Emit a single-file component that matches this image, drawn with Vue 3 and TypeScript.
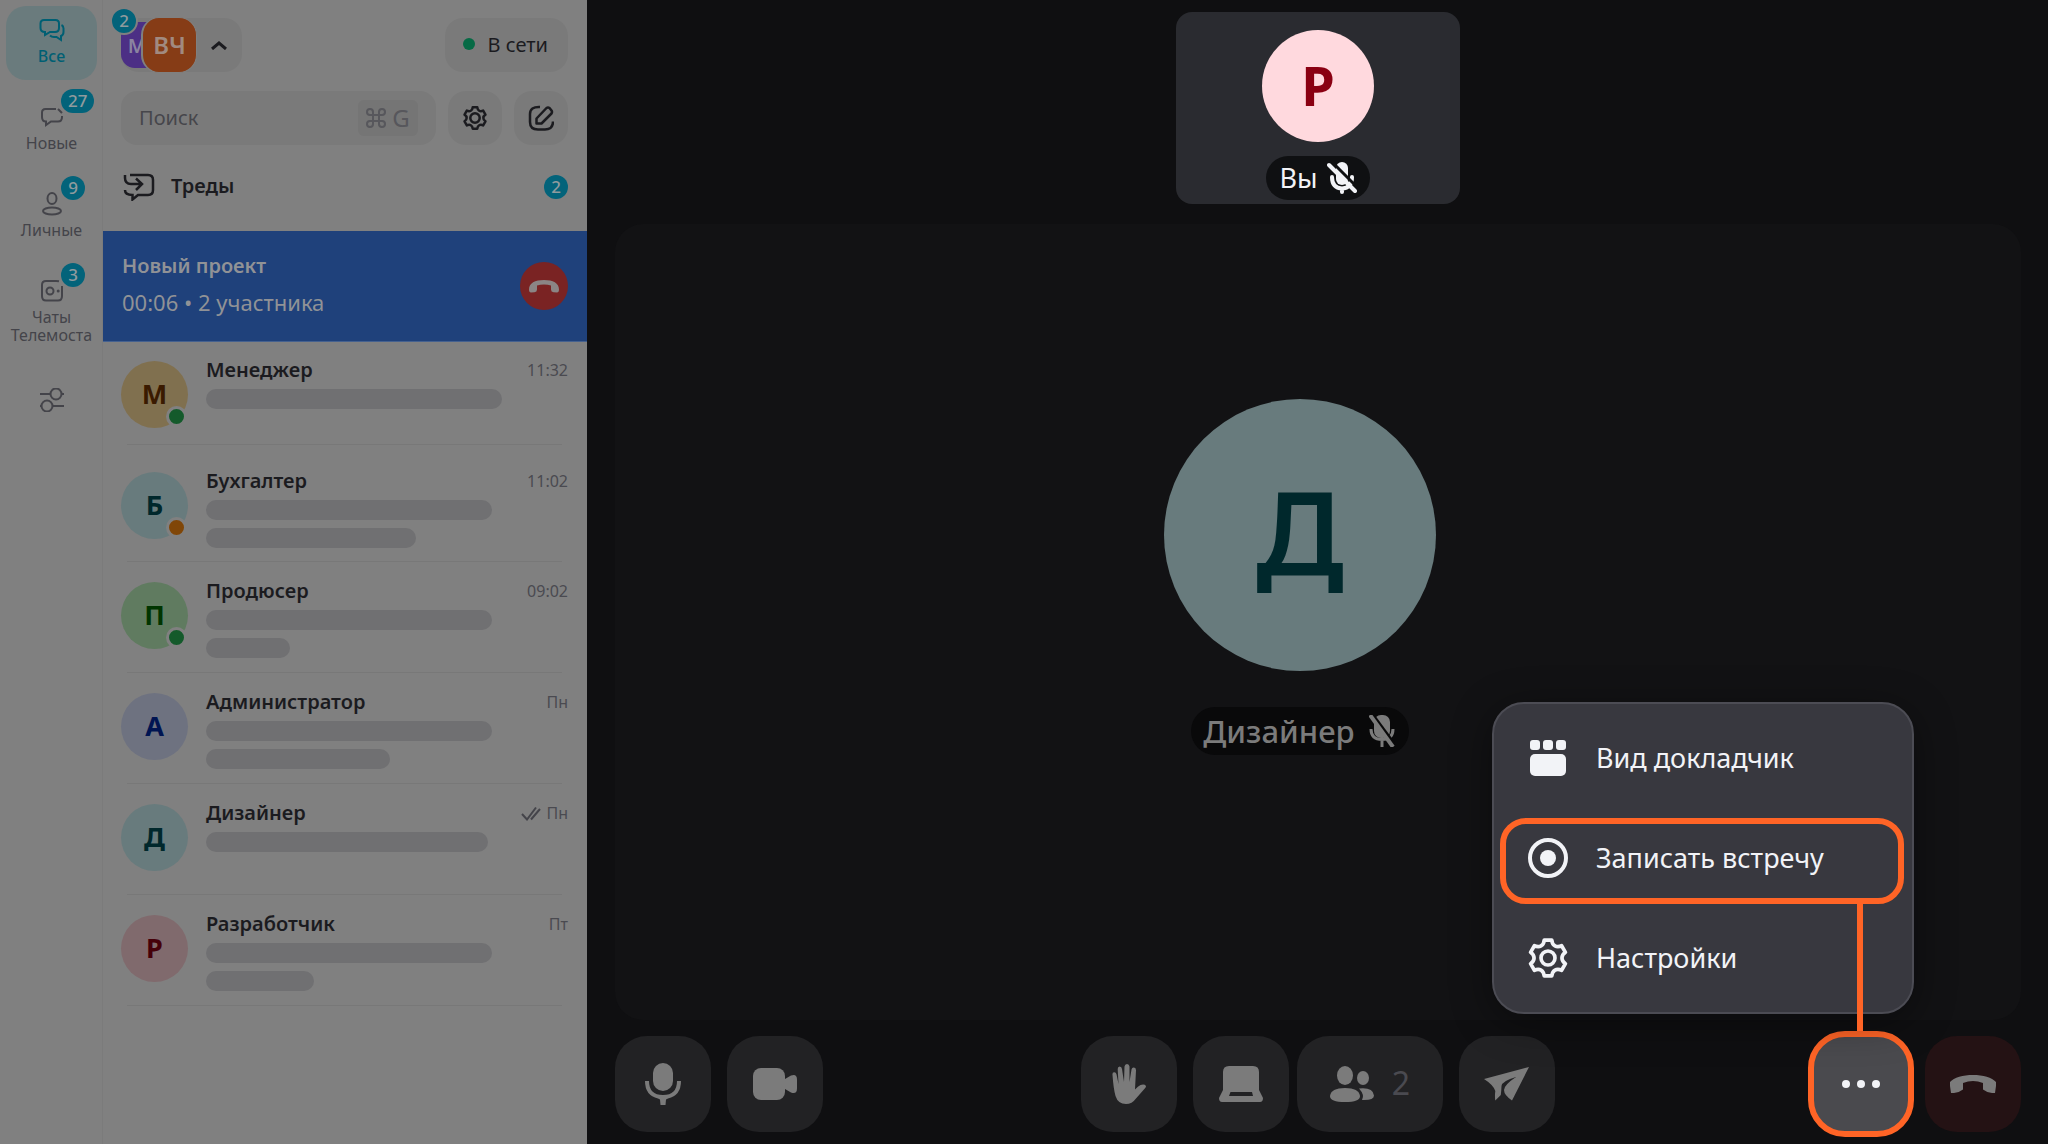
<script setup lang="ts">
import { ref } from 'vue'

interface Chat {
  name: string
  letter: string
  tone: string
  time: string
  bars: number[]
  presence?: string
  read?: boolean
}

const chats: Chat[] = [
  { name: 'Менеджер', letter: 'М', tone: 'amber', time: '11:32', bars: [296], presence: 'online' },
  { name: 'Бухгалтер', letter: 'Б', tone: 'aqua', time: '11:02', bars: [286, 210], presence: 'away' },
  { name: 'Продюсер', letter: 'П', tone: 'green', time: '09:02', bars: [286, 84], presence: 'online' },
  { name: 'Администратор', letter: 'А', tone: 'blue', time: 'Пн', bars: [286, 184] },
  { name: 'Дизайнер', letter: 'Д', tone: 'aqua', time: 'Пн', bars: [282], read: true },
  { name: 'Разработчик', letter: 'Р', tone: 'rose', time: 'Пт', bars: [286, 108] },
]

const search = ref('')

// Outline of a six-toothed gear centred on the origin.
function gearOutline(outer: number, valley: number): string {
  const at = (deg: number, r: number) => {
    const a = ((deg - 90) * Math.PI) / 180
    return `${(r * Math.cos(a)).toFixed(2)} ${(r * Math.sin(a)).toFixed(2)}`
  }
  let d = `M${at(-12, outer)}`
  for (let k = 0; k < 6; k++) {
    const t = k * 60
    d += `L${at(t + 12, outer)}C${at(t + 19, valley)} ${at(t + 41, valley)} ${at(t + 48, outer)}`
  }
  return d + 'Z'
}
const gear = gearOutline(11, 7.8)
</script>

<template>
  <div class="app">
    <nav class="rail" aria-label="Разделы">
      <a class="rail-item active" href="#all">
        <svg class="rail-icon" viewBox="0 0 26 24" fill="none">
          <path d="M5 2h11.500q3.500 0 3.500 3.500v4.500q0 4-4 4h-5l-5 3v-3q-4.500 0-4.500-4V5.500Q1.500 2 5 2Z" />
          <path d="M22.500 7q2 1 2 3.500v3.500q0 3-2.500 4v4l-4.500-3h-2.500q-2.500 0-4-1.500" />
        </svg>
        <span>Все</span>
      </a>
      <a class="rail-item" href="#new">
        <svg class="rail-icon" viewBox="0 0 26 24" fill="none">
          <path d="M17 4H6.500Q3 4 3 7.500V12q0 4.500 4 4.500v3.500l5-3.500h7q4 0 4-4.500V11M19 4l4 4" />
        </svg>
        <span>Новые</span>
        <b class="badge rail-badge">27</b>
      </a>
      <a class="rail-item" href="#personal">
        <svg class="rail-icon" viewBox="0 0 26 24" fill="none">
          <ellipse cx="13" cy="6.500" rx="4.500" ry="5.500" />
          <ellipse cx="13" cy="19" rx="9" ry="3.500" />
        </svg>
        <span>Личные</span>
        <b class="badge rail-badge">9</b>
      </a>
      <a class="rail-item" href="#telemost">
        <svg class="rail-icon" viewBox="0 0 26 24" fill="none">
          <path d="M20 2.300Q18.500 2 17 2H7Q3 2 3 6v11q0 4.500 4 4.500h12q4 0 4-4.500V7" />
          <circle cx="11" cy="12" r="3.500" />
          <circle class="dot-fill" cx="19.200" cy="12" r="1.500" />
        </svg>
        <span>Чаты<br />Телемоста</span>
        <b class="badge rail-badge">3</b>
      </a>
      <button class="rail-filter" type="button" aria-label="Фильтры">
        <svg class="rail-icon" viewBox="0 0 26 24" fill="none">
          <path d="M1 6h10.500M22.500 6H25M1 18h1.500M13.500 18H25" />
          <circle cx="17" cy="6" r="5.500" />
          <circle cx="8" cy="18" r="5.500" />
        </svg>
      </button>
    </nav>

    <aside class="panel">
      <header class="panel-top">
        <button class="accounts" type="button" aria-label="Аккаунты">
          <span class="account back">М</span>
          <span class="account front">ВЧ</span>
          <svg class="chevron" viewBox="0 0 16 9" fill="none"><path d="M1 8 8 2l7 6" /></svg>
          <b class="badge account-badge">2</b>
        </button>
        <button class="status" type="button"><i class="status-dot"></i>В сети</button>
      </header>

      <div class="tools">
        <label class="search">
          <input v-model="search" type="text" placeholder="Поиск" aria-label="Поиск" />
          <kbd>
            <svg viewBox="0 0 20 20" fill="none">
              <path d="M7 7V4a3 3 0 1 0-3 3h12a3 3 0 1 0-3-3v12a3 3 0 1 0 3-3H4a3 3 0 1 0 3 3Z" />
            </svg>
            G
          </kbd>
        </label>
        <button class="tool" type="button" aria-label="Настройки">
          <svg class="tool-icon" viewBox="-13 -13 26 26" fill="none">
            <path :d="gear" /><circle r="4.700" />
          </svg>
        </button>
        <button class="tool" type="button" aria-label="Новое сообщение">
          <svg class="tool-icon" viewBox="0 0 26 26" fill="none">
            <path d="M12 2Q2 1.500 2 9v8q0 7.500 8 7.500h7q8 0 8-8" />
            <path d="M8.500 18.500v-5L18.500 3q1.500-1 3 0l2 2.500q1 1.500 0 3L13.500 18.500Z" />
          </svg>
        </button>
      </div>

      <a class="threads" href="#threads">
        <svg class="threads-icon" viewBox="0 0 32 28" fill="none">
          <path d="M7 2h18q5 0 5 5v10q0 5-5 5H15l-5.500 4.500V22Q2 22 2 17" />
          <path d="M2 2v3q0 6 6 6h10M13 5.500l6 5.500-6 6" />
        </svg>
        <span>Треды</span>
        <b class="badge">2</b>
      </a>

      <section class="call">
        <div class="call-info">
          <strong>Новый проект</strong>
          <span>00:06 • 2 участника</span>
        </div>
        <button class="call-end" type="button" aria-label="Завершить звонок">
          <svg viewBox="0 0 30 13">
            <path d="M0 9.500C0 3 6 0 15 0s15 3 15 9.500q0 3-2 3l-3.500-.3q-2.500-.2-2.500-2.700v-4q-3-1-7-1t-7 1v4q0 2.500-2.500 2.700L2 12.500q-2 0-2-3Z" />
          </svg>
        </button>
      </section>

      <ul class="chats">
        <li v-for="chat in chats" :key="chat.name" class="chat">
          <span class="avatar" :class="chat.tone">
            {{ chat.letter }}
            <i v-if="chat.presence" class="presence" :class="chat.presence"></i>
          </span>
          <div class="chat-body">
            <div class="chat-head">
              <span class="chat-name">{{ chat.name }}</span>
              <svg v-if="chat.read" class="read" viewBox="0 0 20 15" fill="none">
                <path d="M1 8l5 5.500L15 1.500M10 13.500 19 3" />
              </svg>
              <time>{{ chat.time }}</time>
            </div>
            <div v-for="bar in chat.bars" :key="bar" class="bar" :style="{ width: bar + 'px' }"></div>
          </div>
        </li>
      </ul>
    </aside>

    <main class="meeting">
      <div class="tile">
        <span class="tile-avatar">Р</span>
        <span class="tile-name">
          Вы
          <svg class="muted-tile" viewBox="0 0 30 32" fill="none">
            <rect x="9" y="0" width="12" height="23" rx="6" fill="#f2f3f7" />
            <path d="M5 15q0 11 10 11.500Q25 26 25 15M15 27v3" stroke="#f2f3f7" stroke-width="4" stroke-linecap="round" />
            <path d="M5 0 30 25" stroke="#0f1012" stroke-width="3" />
            <path d="M2 3l26 26" stroke="#f2f3f7" stroke-width="4" stroke-linecap="round" />
          </svg>
        </span>
      </div>

      <section class="stage">
        <span class="stage-avatar">Д</span>
        <span class="stage-name">
          Дизайнер
          <svg class="muted-stage" viewBox="0 0 26 32" fill="none">
            <rect x="5" y="0" width="16" height="23" rx="7" fill="#7b7b7b" />
            <path d="M2 14q0 10.500 11 10.500T24 14M13 25v7" stroke="#7b7b7b" stroke-width="3" />
            <path d="M4 0l23 31" stroke="#09090a" stroke-width="3" />
            <path d="M1 0l23 32" stroke="#7b7b7b" stroke-width="4" />
          </svg>
        </span>
      </section>

      <footer class="toolbar">
        <div class="group start">
          <button class="control" type="button" aria-label="Микрофон">
            <svg width="36" height="42" viewBox="0 0 36 42">
              <rect x="8" y="0" width="20" height="28" rx="10" />
              <path d="M0 18h4q0 14 14 14t14-14h4q0 14.500-13 17.500l-2 1-.5 5.500h-5l-.5-5.500-2-1Q0 32.500 0 18Z" />
            </svg>
          </button>
          <button class="control" type="button" aria-label="Камера">
            <svg width="44" height="32" viewBox="0 0 44 32">
              <rect width="32" height="32" rx="8" />
              <path d="M32 11l6-3.500q6-2 6 4v9q0 6-6 4L32 21Z" />
            </svg>
          </button>
        </div>

        <div class="group">
          <button class="control" type="button" aria-label="Поднять руку">
            <svg width="34" height="40" viewBox="0 0 34 40">
              <path d="M.5 11q-.3-2.500 1.500-2.700 2-.2 2.500 2l2 9.700-.8-15q0-2.500 2-2.500t2.300 2.500L12 18l.5-15.500Q12.800 0 15 0t2.500 2.500V18l2-12.500q.5-2.300 2.500-2t2 2.700L23 25.500q3-3.500 5.500-4.500 4-1.200 5.300.8.5 1-.6 2.200L24 34.500Q20 40 14 40 6 40 3.500 32 1.500 25 .5 11Z" />
            </svg>
          </button>
          <button class="control" type="button" aria-label="Показать экран">
            <svg width="44" height="36" viewBox="0 0 44 36">
              <path fill-rule="evenodd" d="M4 6q0-6 6-6h24q6 0 6 6v18l4 8q0 4-3 4H3q-3 0-3-4l4-8ZM11.500 26l-1.500 4h24l-1-4Z" />
            </svg>
          </button>
          <button class="control people" type="button" aria-label="Участники: 2">
            <svg width="44" height="36" viewBox="0 0 44 36">
              <ellipse cx="15" cy="9.500" rx="8" ry="9.500" />
              <ellipse cx="33" cy="12" rx="6" ry="7" />
              <path d="M15 22q14 0 15 8 0 6-15 6T0 30q1-8 15-8Z" />
              <path d="M29 22.500q14-1.500 15 7 0 5-12 4.500 3-5-3-11.500Z" />
            </svg>
            <span>2</span>
          </button>
          <button class="control" type="button" aria-label="Отправить">
            <svg width="46" height="34" viewBox="0 0 46 34">
              <path d="M0 12 45 0 28 33.500Q20 28 20 23q0-5 12-13-14 4-14.500 9-.2 5-.7 9l-5.500 5.500q-.7-4 0-9.500Q9.500 18 0 12Z" />
            </svg>
          </button>
        </div>

        <div class="group end">
          <div class="more-wrap">
            <button class="control more" type="button" aria-label="Ещё">
              <svg width="40" height="8" viewBox="0 0 40 8">
                <circle cx="5" cy="4" r="4" /><circle cx="20" cy="4" r="4" /><circle cx="35" cy="4" r="4" />
              </svg>
            </button>
            <div class="menu" role="menu">
              <button class="menu-item" type="button" role="menuitem">
                <svg viewBox="0 0 40 40">
                  <rect x="2" y="2" width="10" height="10" rx="3" />
                  <rect x="15" y="2" width="10" height="10" rx="3" />
                  <rect x="28" y="2" width="10" height="10" rx="3" />
                  <rect x="2" y="16" width="36" height="22" rx="5" />
                </svg>
                <span>Вид докладчик</span>
              </button>
              <button class="menu-item marked" type="button" role="menuitem">
                <svg viewBox="0 0 40 40">
                  <circle class="line" cx="20" cy="20" r="18" /><circle cx="20" cy="20" r="8" />
                </svg>
                <span>Записать встречу</span>
              </button>
              <button class="menu-item" type="button" role="menuitem">
                <svg viewBox="-12 -12 24 24">
                  <path class="line thin" :d="gear" /><circle class="line thin" r="4.200" />
                </svg>
                <span>Настройки</span>
              </button>
            </div>
          </div>
          <button class="control hangup" type="button" aria-label="Завершить встречу">
            <svg width="46" height="18" viewBox="0 0 46 18">
              <path d="M0 7C4 2.500 13 0 23 0s19 2.500 23 7v4l-1 7q-7 .5-12-3.500V8q-5-2-10-2T13 8v6.500Q8 18.500 1 18L0 11Z" />
            </svg>
          </button>
        </div>
      </footer>
    </main>
  </div>
</template>

<style>
body {
  background: #0f0f11;
}
</style>

<style scoped>
.app,
.app *,
.app *::before,
.app *::after {
  box-sizing: border-box;
}
.app {
  display: flex;
  min-height: 100vh;
  font-family: "Noto Sans", "Open Sans", sans-serif;
  color: #1b1b1f;
}
button,
input,
kbd {
  font: inherit;
  color: inherit;
  border: 0;
  padding: 0;
  margin: 0;
  background: none;
}
svg {
  display: block;
  flex: none;
}
a {
  color: inherit;
  text-decoration: none;
}

/* Section rail */
.rail {
  flex: none;
  width: 103px;
  padding: 6px;
  display: flex;
  flex-direction: column;
  gap: 13px;
  background: #808080;
  border-right: 1px solid #7b7b7b;
  color: #44444a;
}
.rail-item {
  position: relative;
  width: 91px;
  padding: 12px 0 15px;
  display: flex;
  flex-direction: column;
  align-items: center;
  gap: 5px;
  border-radius: 20px;
  font-size: 16px;
  line-height: 18px;
  text-align: center;
}
.rail-item.active {
  background: #6a7b7d;
  color: #005f73;
  font-weight: 500;
}
.rail-icon {
  width: 26px;
  height: 24px;
  stroke: currentColor;
  stroke-width: 2;
}
.dot-fill {
  fill: currentColor;
  stroke: none;
}
.rail-filter {
  width: 91px;
  margin-top: 16px;
  display: flex;
  justify-content: center;
}
.badge {
  min-width: 24px;
  height: 24px;
  padding: 0 7px;
  display: flex;
  align-items: center;
  justify-content: center;
  border-radius: 12px;
  background: #03637a;
  color: #8f9b9e;
  font-size: 17px;
  line-height: 22px;
  font-weight: 500;
}
.rail-badge {
  position: absolute;
  left: 55px;
  top: -4px;
}

/* Chat list panel */
.panel {
  flex: none;
  width: 484px;
  background: #808080;
}
.panel-top {
  display: flex;
  justify-content: space-between;
  padding: 18px 19px 0 18px;
}
.accounts {
  position: relative;
  display: flex;
  align-items: center;
  height: 54px;
  padding-right: 15px;
  border-radius: 18px;
  background: #7a7a7a;
}
.account {
  display: flex;
  align-items: center;
  justify-content: center;
  font-weight: 600;
}
.account.back {
  width: 46px;
  height: 46px;
  border-radius: 14px;
  background: #4c2f85;
  color: #8b84a0;
  font-size: 20px;
  padding-right: 14px;
}
.account.front {
  width: 56px;
  height: 56px;
  margin: 0 14px 0 -26px;
  border: 1px solid #808080;
  border-left-width: 2px;
  border-radius: 18px;
  background: #863c16;
  color: #a18a80;
  font-size: 24px;
  padding-bottom: 2px;
}
.chevron {
  width: 16px;
  height: 9px;
  stroke: #1b1b1f;
  stroke-width: 3;
}
.account-badge {
  position: absolute;
  left: -11px;
  top: -11px;
  height: 28px;
  min-width: 28px;
  padding: 0;
  border: 2px solid #808080;
  border-radius: 14px;
}
.status {
  display: flex;
  align-items: center;
  gap: 13px;
  height: 54px;
  padding: 0 20px 2px 18px;
  border-radius: 18px;
  background: #7a7a7a;
  font-size: 20px;
}
.status-dot {
  width: 12px;
  height: 12px;
  border-radius: 50%;
  background: #066a45;
}
.tools {
  display: flex;
  gap: 12px;
  padding: 19px 19px 0 18px;
}
.search {
  flex: 1;
  min-width: 0;
  height: 54px;
  display: flex;
  align-items: center;
  padding: 0 18px;
  border-radius: 16px;
  background: #7a7a7a;
}
.search input {
  flex: 1;
  min-width: 0;
  padding-bottom: 2px;
  outline: none;
  font-size: 20px;
}
.search input::placeholder {
  color: #46464b;
  opacity: 1;
}
kbd {
  width: 60px;
  height: 36px;
  display: flex;
  align-items: center;
  justify-content: center;
  gap: 6px;
  border-radius: 6px;
  background: #757575;
  color: #57575c;
  font-size: 24px;
  line-height: 34px;
}
kbd svg {
  width: 20px;
  height: 20px;
  stroke: currentColor;
  stroke-width: 2;
}
.tool {
  flex: none;
  width: 54px;
  height: 54px;
  display: flex;
  align-items: center;
  justify-content: center;
  border-radius: 18px;
  background: #7a7a7a;
}
.tool-icon {
  width: 26px;
  height: 26px;
  stroke: #1b1b1f;
  stroke-width: 2.500;
  stroke-linejoin: round;
}
.threads {
  display: flex;
  align-items: center;
  height: 86px;
  padding: 0 19px 2px 20px;
  font-size: 20px;
  line-height: 28px;
  font-weight: 600;
}
.threads span {
  padding-bottom: 2px;
}
.threads-icon {
  width: 32px;
  height: 28px;
  margin-right: 16px;
  stroke: #1b1b1f;
  stroke-width: 2.500;
}
.threads .badge {
  margin-left: auto;
  padding: 0;
}
.call {
  display: flex;
  align-items: center;
  justify-content: space-between;
  height: 111px;
  padding: 0 19px;
  background: #1f417b;
  border-bottom: 1px solid #45618f;
  color: #909296;
}
.call-info {
  display: flex;
  flex-direction: column;
  gap: 8px;
  padding-bottom: 4px;
  font-size: 22px;
  line-height: 28px;
}
.call-info strong {
  font-size: 20px;
  font-weight: 600;
}
.call-end {
  width: 48px;
  height: 48px;
  display: flex;
  align-items: center;
  justify-content: center;
  border-radius: 50%;
  background: #7a2323;
}
.call-end svg {
  width: 30px;
  height: 13px;
  fill: #8b8585;
}
.chats {
  list-style: none;
  margin: 0;
  padding: 0;
}
.chat {
  position: relative;
  display: flex;
  gap: 18px;
  height: 111px;
  padding: 20px 19px 0 18px;
}
.chat:nth-child(1) {
  height: 103px;
  padding-top: 19px;
}
.chat:nth-child(2) {
  height: 117px;
  padding-top: 27px;
}
.chat::after {
  content: "";
  position: absolute;
  left: 24px;
  right: 25px;
  bottom: 0;
  height: 1px;
  background: #787878;
}
.avatar {
  position: relative;
  flex: none;
  width: 67px;
  height: 67px;
  padding-bottom: 2px;
  display: flex;
  align-items: center;
  justify-content: center;
  border-radius: 50%;
  font-size: 27px;
  font-weight: 700;
}
.amber { background: #80704f; color: #3a1a00; }
.aqua { background: #687b7d; color: #00282c; }
.green { background: #607b60; color: #003500; }
.blue { background: #6e7280; color: #001452; }
.rose { background: #806a6d; color: #450009; }
.presence {
  position: absolute;
  right: 1px;
  bottom: 1px;
  width: 21px;
  height: 21px;
  border: 3px solid #808080;
  border-radius: 50%;
}
.presence.online { background: #145a2b; }
.presence.away { background: #804607; }
.chat-body {
  flex: 1;
  min-width: 0;
  display: flex;
  flex-direction: column;
  gap: 8px;
}
.chat-head {
  display: flex;
  align-items: center;
  height: 20px;
  padding-bottom: 2px;
}
.chat-name {
  flex: 1;
  font-size: 20px;
  font-weight: 600;
  line-height: 20px;
}
.read {
  width: 20px;
  height: 15px;
  margin-right: 5px;
  stroke: #44444a;
  stroke-width: 2;
}
time {
  color: #4a4a50;
  font-size: 16px;
  line-height: 20px;
}
.bar {
  height: 20px;
  border-radius: 10px;
  background: #707072;
}

/* Meeting area */
.meeting {
  flex: 1;
  min-width: 0;
  display: flex;
  flex-direction: column;
  padding: 12px 27px 12px 28px;
  background: #0f0f11;
}
.tile {
  align-self: center;
  width: 284px;
  height: 192px;
  padding-top: 18px;
  display: flex;
  flex-direction: column;
  align-items: center;
  gap: 14px;
  border-radius: 16px;
  background: #2a2b30;
}
.tile-avatar {
  width: 112px;
  height: 112px;
  padding-bottom: 2px;
  display: flex;
  align-items: center;
  justify-content: center;
  border-radius: 50%;
  background: #ffd9de;
  color: #8a0012;
  font-size: 54px;
  line-height: 64px;
  font-weight: 700;
}
.tile-name {
  height: 44px;
  padding: 0 13px;
  display: flex;
  align-items: center;
  gap: 9px;
  border-radius: 22px;
  background: #0f1012;
  color: #f2f3f7;
  font-size: 27px;
  line-height: 44px;
}
.muted-tile {
  width: 30px;
  height: 32px;
}
.stage {
  flex: 1;
  margin-top: 20px;
  padding: 175px 36px 0 0;
  display: flex;
  flex-direction: column;
  align-items: center;
  gap: 36px;
  border-radius: 28px;
  background: #121214;
}
.stage-avatar {
  width: 272px;
  height: 272px;
  padding-bottom: 10px;
  display: flex;
  align-items: center;
  justify-content: center;
  border-radius: 50%;
  background: #687b7d;
  color: #00282c;
  font-size: 116px;
  line-height: 160px;
  font-weight: 600;
}
.stage-name {
  height: 48px;
  padding: 0 14px 0 12px;
  display: flex;
  align-items: center;
  gap: 14px;
  border-radius: 24px;
  background: #09090a;
  color: #7b7b7b;
  font-size: 31px;
  line-height: 46px;
  font-weight: 500;
}
.muted-stage {
  width: 26px;
  height: 32px;
}

/* Call controls */
.toolbar {
  display: grid;
  grid-template-columns: 1fr auto 1fr;
  margin-top: 16px;
}
.group {
  display: flex;
  gap: 16px;
}
.end {
  justify-content: flex-end;
}
.control {
  width: 96px;
  height: 96px;
  display: flex;
  align-items: center;
  justify-content: center;
  border-radius: 32px;
  background: #222224;
}
.control svg {
  fill: #7b7b7b;
}
.people {
  width: 146px;
  margin-left: -8px;
  gap: 18px;
  color: #4a4a50;
  font-size: 32px;
}
.people span {
  padding-bottom: 4px;
}
.more-wrap {
  position: relative;
}
.more {
  background: #4a4a4e;
  outline: 6px solid #ff6426;
  outline-offset: -1px;
}
.more svg {
  fill: #f2f3f7;
}
.hangup {
  background: #241214;
}
.menu {
  position: absolute;
  right: -5px;
  bottom: 118px;
  width: 422px;
  padding: 4px 0;
  border: 2px solid #4c4c54;
  border-radius: 32px;
  background: #38383f;
  box-shadow: 0 8px 40px rgba(0, 0, 0, 0.4);
}
.menu-item {
  position: relative;
  width: 100%;
  height: 100px;
  padding-left: 34px;
  display: flex;
  align-items: center;
  gap: 28px;
  color: #f2f3f7;
  font-size: 27px;
}
.menu-item span {
  padding-bottom: 2px;
}
.menu-item svg {
  width: 40px;
  height: 40px;
  fill: #f2f3f7;
}
.menu-item .line {
  fill: none;
  stroke: #f2f3f7;
  stroke-width: 4;
  stroke-linejoin: round;
}
.menu-item .thin {
  stroke-width: 2.200;
}
.marked::before {
  content: "";
  position: absolute;
  top: 10px;
  left: 6px;
  right: 8px;
  height: 86px;
  border: 6px solid #ff6426;
  border-radius: 26px;
}
.marked::after {
  content: "";
  position: absolute;
  top: 95px;
  right: 49px;
  width: 6px;
  height: 128px;
  background: #ff6426;
}
</style>
